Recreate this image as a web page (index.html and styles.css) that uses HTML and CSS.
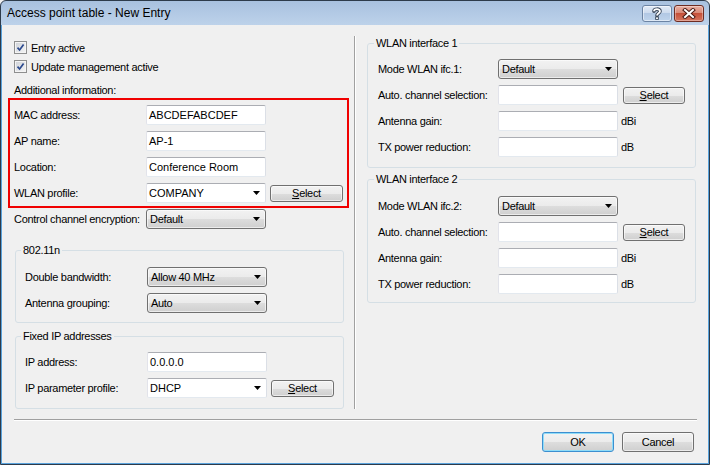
FILE: index.html
```html
<!DOCTYPE html>
<html>
<head>
<meta charset="utf-8">
<title>Access point table - New Entry</title>
<link rel="stylesheet" href="styles.css">
</head>
<body>
<div class="window">
  <div class="titlebar">
    <div class="title">Access point table - New Entry</div>
    <div class="caption-btns">
      <div class="cbtn help">
        <svg width="12" height="13" viewBox="0 0 12 13">
          <path d="M3 4.2C3 1.6 9 1.4 9 4.2C9 6.2 6 6.2 6 8.4" fill="none" stroke="#3a4658" stroke-width="3.6" stroke-linecap="round"/>
          <rect x="4.2" y="9.6" width="3.6" height="3.2" fill="#3a4658"/>
          <path d="M3 4.2C3 1.6 9 1.4 9 4.2C9 6.2 6 6.2 6 8.4" fill="none" stroke="#fff" stroke-width="1.8"/>
          <rect x="5.1" y="10.4" width="1.8" height="1.6" fill="#fff"/>
        </svg>
      </div>
      <div class="cbtn close">
        <svg width="14" height="11" viewBox="0 0 14 11">
          <path d="M3 2L11 9M11 2L3 9" fill="none" stroke="#4a1a14" stroke-width="4" stroke-linecap="square"/>
          <path d="M3 2L11 9M11 2L3 9" fill="none" stroke="#fff" stroke-width="2" stroke-linecap="square"/>
        </svg>
      </div>
    </div>
  </div>

  <div class="client">
    <div class="main">
      <div class="col-left">
        <div class="check"><span class="box"><svg width="9" height="9" viewBox="0 0 9 9"><path d="M1.5 4.6L3.6 7L7.6 1.4" fill="none" stroke="#2c4a8e" stroke-width="1.7"/></svg></span>Entry active</div>
        <div class="check"><span class="box"><svg width="9" height="9" viewBox="0 0 9 9"><path d="M1.5 4.6L3.6 7L7.6 1.4" fill="none" stroke="#2c4a8e" stroke-width="1.7"/></svg></span>Update management active</div>
        <div class="note">Additional information:</div>

        <div class="highlight">
          <div class="row"><span class="lbl">MAC address:</span><span class="edit">ABCDEFABCDEF</span></div>
          <div class="row"><span class="lbl">AP name:</span><span class="edit">AP-1</span></div>
          <div class="row"><span class="lbl">Location:</span><span class="edit">Conference Room</span></div>
          <div class="row"><span class="lbl">WLAN profile:</span><span class="edit combo">COMPANY<svg class="arr" width="7" height="4" viewBox="0 0 7 4"><path d="M0 0H7L3.5 4Z"/></svg></span><button class="btn sel w73"><u>S</u>elect</button></div>
        </div>

        <div class="row solo"><span class="lbl">Control channel encryption:</span><span class="dd">Default<svg class="arr" width="7" height="4" viewBox="0 0 7 4"><path d="M0 0H7L3.5 4Z"/></svg></span></div>

        <fieldset class="grp grp-a">
          <legend>802.11n</legend>
          <div class="rows">
            <div class="row"><span class="lbl">Double bandwidth:</span><span class="dd">Allow 40 MHz<svg class="arr" width="7" height="4" viewBox="0 0 7 4"><path d="M0 0H7L3.5 4Z"/></svg></span></div>
            <div class="row"><span class="lbl">Antenna grouping:</span><span class="dd">Auto<svg class="arr" width="7" height="4" viewBox="0 0 7 4"><path d="M0 0H7L3.5 4Z"/></svg></span></div>
          </div>
        </fieldset>

        <fieldset class="grp grp-b">
          <legend>Fixed IP addresses</legend>
          <div class="rows">
            <div class="row"><span class="lbl">IP address:</span><span class="edit">0.0.0.0</span></div>
            <div class="row"><span class="lbl">IP parameter profile:</span><span class="edit combo">DHCP<svg class="arr" width="7" height="4" viewBox="0 0 7 4"><path d="M0 0H7L3.5 4Z"/></svg></span><button class="btn sel w63"><u>S</u>elect</button></div>
          </div>
        </fieldset>
      </div>

      <div class="vsep"></div>

      <div class="col-right">
        <fieldset class="grp grp-r1">
          <legend>WLAN interface 1</legend>
          <div class="rows">
            <div class="row"><span class="lbl">Mode WLAN ifc.1:</span><span class="dd">Default<svg class="arr" width="7" height="4" viewBox="0 0 7 4"><path d="M0 0H7L3.5 4Z"/></svg></span></div>
            <div class="row"><span class="lbl">Auto. channel selection:</span><span class="edit"></span><button class="btn sel w62"><u>S</u>elect</button></div>
            <div class="row"><span class="lbl">Antenna gain:</span><span class="edit"></span><span class="unit">dBi</span></div>
            <div class="row"><span class="lbl">TX power reduction:</span><span class="edit"></span><span class="unit">dB</span></div>
          </div>
        </fieldset>

        <fieldset class="grp grp-r2">
          <legend>WLAN interface 2</legend>
          <div class="rows">
            <div class="row"><span class="lbl">Mode WLAN ifc.2:</span><span class="dd">Default<svg class="arr" width="7" height="4" viewBox="0 0 7 4"><path d="M0 0H7L3.5 4Z"/></svg></span></div>
            <div class="row"><span class="lbl">Auto. channel selection:</span><span class="edit"></span><button class="btn sel w62"><u>S</u>elect</button></div>
            <div class="row"><span class="lbl">Antenna gain:</span><span class="edit"></span><span class="unit">dBi</span></div>
            <div class="row"><span class="lbl">TX power reduction:</span><span class="edit"></span><span class="unit">dB</span></div>
          </div>
        </fieldset>
      </div>
    </div>

    <div class="hsep"></div>

    <div class="footer">
      <button class="btn big default">OK</button>
      <button class="btn big">Cancel</button>
    </div>
  </div>
</div>
</body>
</html>
```

FILE: styles.css
```css
* { box-sizing: border-box; }
html, body { margin: 0; padding: 0; }
body {
  width: 710px;
  height: 465px;
  overflow: hidden;
  background: #f0f0f0;
  color: #000;
  font-family: "Liberation Sans", Arial, sans-serif;
  font-size: 11px;
  letter-spacing: -0.3px;
}

/* window frame */
.window {
  width: 710px;
  height: 465px;
  border: 1px solid #2d3b4b;
  border-radius: 6px 6px 0 0;
  background: linear-gradient(#a8c1df, #bdd2ea 24px);
  display: flex;
  flex-direction: column;
  overflow: hidden;
}
.titlebar {
  flex: none;
  height: 24px;
  display: flex;
  justify-content: space-between;
  align-items: flex-start;
  padding: 4px 5px 0 6px;
}
.title {
  font-size: 12px;
  letter-spacing: 0;
  line-height: 16px;
  color: #000;
}
.caption-btns { display: flex; gap: 2px; }
.cbtn {
  width: 30px;
  height: 17px;
  border-radius: 3px;
  border: 1px solid #6c84a4;
  display: flex;
  align-items: center;
  justify-content: center;
}
.help {
  background: linear-gradient(#e2ebf7 0%, #cddbee 45%, #b2c8e4 50%, #bfd4ec 100%);
  box-shadow: inset 0 0 0 1px rgba(255,255,255,0.5);
}
.close {
  border-color: #6e2c22;
  background: linear-gradient(#e9b0a3 0%, #d98a78 45%, #c65039 50%, #d57660 100%);
  box-shadow: inset 0 0 0 1px rgba(255,255,255,0.35);
}

.client {
  flex: 1;
  background: #f0f0f0;
  border: 1px solid #5aa3dc;
  border-top: none;
  display: flex;
  flex-direction: column;
}
.main { display: flex; align-items: stretch; }

/* left column */
.col-left {
  flex: none;
  width: 352px;
  padding: 13px 0 0 6px;
  display: flex;
  flex-direction: column;
  align-items: flex-start;
}
.check {
  display: flex;
  align-items: center;
  gap: 4px;
  height: 19px;
  margin-left: 6px;
}
.box {
  width: 13px;
  height: 13px;
  border: 1px solid #8e8f8f;
  background: linear-gradient(135deg, #cdd1d7, #f6f6f6);
  box-shadow: inset 0 0 0 1px #f4f4f4;
  display: flex;
  align-items: center;
  justify-content: center;
}
.note {
  margin: 7px 0 0 6px;
  line-height: 14px;
}
.highlight {
  margin-top: 1px;
  width: 341px;
  border: 2px solid #f00000;
  padding: 5px 0 3px 4px;
  display: flex;
  flex-direction: column;
  gap: 6px;
}
.row {
  display: flex;
  align-items: center;
  height: 20px;
  white-space: nowrap;
}
.highlight .lbl, .solo .lbl { width: 132px; }
.solo { margin: 1px 0 0 6px; }

.rows { display: flex; flex-direction: column; gap: 6px; }

/* group boxes */
.grp {
  margin: 0;
  min-width: 0;
  width: 329px;
  border: 1px solid #d5dfe5;
  border-radius: 3px;
}
.grp legend {
  padding: 0 2px;
  margin-left: -4px;
  line-height: 14px;
}
.grp-a { margin: 14px 0 0 7px; padding: 10px 0 9px 9px; }
.grp-b { margin: 6px 0 0 7px; padding: 9px 0 10px 9px; }
.grp-a .lbl, .grp-b .lbl { width: 122px; }

.col-right {
  flex: 1;
  padding-top: 11px;
  display: flex;
  flex-direction: column;
}
.grp-r1 { margin: 0 0 0 11px; padding: 9px 0 10px 10px; }
.grp-r2 { margin: 4px 0 0 11px; padding: 10px 0 8px 10px; }
.col-right .lbl { width: 120px; }

/* controls */
.edit {
  width: 120px;
  height: 20px;
  border: 1px solid;
  border-color: #abadb3 #dbdfe6 #e3e9ef #e2e3ea;
  border-radius: 2px;
  background: #fff;
  padding-left: 2px;
  line-height: 18px;
  letter-spacing: 0;
}
.combo {
  display: flex;
  align-items: center;
  justify-content: space-between;
  padding-right: 5px;
}
.dd {
  width: 120px;
  height: 20px;
  border: 1px solid #707070;
  border-radius: 3px;
  background: linear-gradient(#f2f2f2 0%, #ebebeb 50%, #dddddd 51%, #cfcfcf 100%);
  box-shadow: inset 0 0 0 1px rgba(255,255,255,0.6);
  padding: 0 5px 0 3px;
  display: flex;
  align-items: center;
  justify-content: space-between;
}
.arr { flex: none; fill: #000; }
.btn {
  font: inherit;
  letter-spacing: inherit;
  color: #000;
  border: 1px solid #707070;
  border-radius: 3px;
  background: linear-gradient(#f2f2f2 0%, #ebebeb 50%, #dddddd 51%, #cfcfcf 100%);
  box-shadow: inset 0 0 0 1px rgba(255,255,255,0.6);
  padding: 0;
  height: 17px;
  line-height: 15px;
  text-align: center;
}
.sel { margin-left: 4px; }
.col-right .sel { margin-left: 5px; }
.w73 { width: 73px; }
.w63 { width: 63px; }
.w62 { width: 62px; }
.unit { margin-left: 3px; }

/* separators & footer */
.vsep {
  flex: none;
  width: 2px;
  margin-top: 11px;
  border-left: 1px solid #a0a0a0;
  border-right: 1px solid #ffffff;
}
.hsep {
  height: 2px;
  margin: 10px 11px 0 12px;
  border-top: 1px solid #a0a0a0;
  border-bottom: 1px solid #ffffff;
}
.footer {
  display: flex;
  justify-content: flex-end;
  gap: 8px;
  padding: 11px 14px 0 0;
}
.big { width: 72px; height: 20px; line-height: 18px; }
.default {
  border-color: #3c8fd0;
  box-shadow: inset 0 0 0 1px #8fdcf8;
}
```
